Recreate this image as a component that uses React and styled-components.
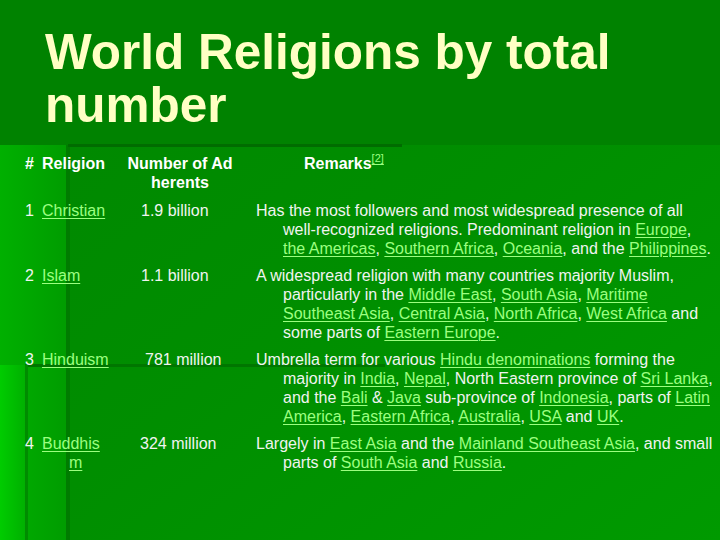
import React from "react"
import styled, { createGlobalStyle } from "styled-components"

const GlobalStyle = createGlobalStyle`
  html, body {
    margin: 0;
    padding: 0;
    background: #008a00;
  }
`

const Slide = styled.div`
  position: relative;
  width: 720px;
  height: 540px;
  overflow: hidden;
  font-family: "Liberation Sans", Arial, sans-serif;
  color: #f2f2f2;
`

const Backdrop = styled.svg`
  position: absolute;
  left: 0;
  top: 0;
  z-index: 0;
`

const Content = styled.div`
  position: relative;
  z-index: 1;
  padding: 25px 0 0 0;
`

const Title = styled.h1`
  margin: 0 0 0 45px;
  font-size: 49.5px;
  line-height: 53px;
  font-weight: bold;
  color: #ffffc4;
  width: 640px;
`

const Table = styled.div`
  margin: 23px 0 0 25px;
  font-size: 16px;
  line-height: 19px;
`

const Row = styled.div`
  display: grid;
  grid-template-columns: 17px 84px 108px 479px;
  margin-bottom: ${(p) => (p.$head ? "9px" : "8px")};
  font-weight: ${(p) => (p.$head ? "bold" : "normal")};
  color: ${(p) => (p.$head ? "#ffffff" : "#f0f4f0")};
`

const Num = styled.div``

const Name = styled.div`
  padding: 0 16px 0 27px;
  text-indent: -27px;
  word-break: break-all;
`

const Count = styled.div`
  text-align: ${(p) => (p.$head ? "center" : "left")};
  padding-left: ${(p) => (p.$head ? "0" : `${15 + (p.$shift || 0)}px`)};
  word-break: break-all;
`

const Remark = styled.div`
  padding-left: ${(p) => (p.$head ? "70px" : "49px")};
  text-indent: ${(p) => (p.$head ? "0" : "-27px")};
`

const Link = styled.a`
  color: #9cff80;
  text-decoration: underline;
  text-underline-offset: 2px;
  text-decoration-thickness: 1px;
`

const Ref = styled.sup`
  font-size: 11px;
  font-weight: normal;
  line-height: 0;
  vertical-align: 7px;
`

function Background() {
  return (
    <Backdrop width="720" height="540" viewBox="0 0 720 540">
      <defs>
        <linearGradient id="strip" x1="0" x2="1" y1="0" y2="0">
          <stop offset="0" stopColor="#00b000" />
          <stop offset="1" stopColor="#009c00" />
        </linearGradient>
        <linearGradient id="edge" x1="0" x2="1" y1="0" y2="0">
          <stop offset="0" stopColor="#00cc00" />
          <stop offset="1" stopColor="#00b000" />
        </linearGradient>
        <linearGradient id="field" x1="0" x2="1" y1="0" y2="1">
          <stop offset="0" stopColor="#008600" />
          <stop offset="0.5" stopColor="#008e00" />
          <stop offset="1" stopColor="#009a00" />
        </linearGradient>
      </defs>
      <rect x="0" y="0" width="720" height="540" fill="url(#field)" />
      <rect x="0" y="0" width="720" height="145" fill="#008200" />
      <rect x="0" y="145" width="68" height="395" fill="url(#strip)" />
      <rect x="0" y="365" width="25" height="175" fill="url(#edge)" />
      <rect x="66" y="145" width="4" height="395" fill="#007c00" />
      <rect x="68" y="144" width="334" height="3" fill="#006c00" />
      <rect x="25" y="364" width="360" height="3" fill="#007600" />
      <rect x="25" y="365" width="3" height="175" fill="#008c00" />
    </Backdrop>
  )
}

export default function App() {
  return (
    <Slide>
      <GlobalStyle />
      <Background />
      <Content>
        <Title>World Religions by total number</Title>
        <Table>
          <Row $head>
            <Num>#</Num>
            <Name>Religion</Name>
            <Count $head>Number of Adherents</Count>
            <Remark $head>
              Remarks<Ref><Link href="#">[2]</Link></Ref>
            </Remark>
          </Row>
          <Row>
            <Num>1</Num>
            <Name><Link href="#">Christian</Link></Name>
            <Count>1.9 billion</Count>
            <Remark>
              Has the most followers and most widespread presence of all well-recognized religions. Predominant religion in{" "}
              <Link href="#">Europe</Link>, <Link href="#">the Americas</Link>, <Link href="#">Southern Africa</Link>,{" "}
              <Link href="#">Oceania</Link>, and the <Link href="#">Philippines</Link>.
            </Remark>
          </Row>
          <Row>
            <Num>2</Num>
            <Name><Link href="#">Islam</Link></Name>
            <Count>1.1 billion</Count>
            <Remark>
              A widespread religion with many countries majority Muslim, particularly in the <Link href="#">Middle East</Link>,{" "}
              <Link href="#">South Asia</Link>, <Link href="#">Maritime Southeast Asia</Link>, <Link href="#">Central Asia</Link>,{" "}
              <Link href="#">North Africa</Link>, <Link href="#">West Africa</Link> and some parts of{" "}
              <Link href="#">Eastern Europe</Link>.
            </Remark>
          </Row>
          <Row>
            <Num>3</Num>
            <Name><Link href="#">Hinduism</Link></Name>
            <Count $shift={4}>781 million</Count>
            <Remark>
              Umbrella term for various <Link href="#">Hindu denominations</Link> forming the majority in{" "}
              <Link href="#">India</Link>, <Link href="#">Nepal</Link>, North Eastern province of <Link href="#">Sri Lanka</Link>,
              and the <Link href="#">Bali</Link> &amp; <Link href="#">Java</Link> sub-province of{" "}
              <Link href="#">Indonesia</Link>, parts of <Link href="#">Latin America</Link>, <Link href="#">Eastern Africa</Link>,{" "}
              <Link href="#">Australia</Link>, <Link href="#">USA</Link> and <Link href="#">UK</Link>.
            </Remark>
          </Row>
          <Row>
            <Num>4</Num>
            <Name><Link href="#">Buddhism</Link></Name>
            <Count $shift={-1}>324 million</Count>
            <Remark>
              Largely in <Link href="#">East Asia</Link> and the <Link href="#">Mainland Southeast Asia</Link>, and small parts of{" "}
              <Link href="#">South Asia</Link> and <Link href="#">Russia</Link>.
            </Remark>
          </Row>
        </Table>
      </Content>
    </Slide>
  )
}
